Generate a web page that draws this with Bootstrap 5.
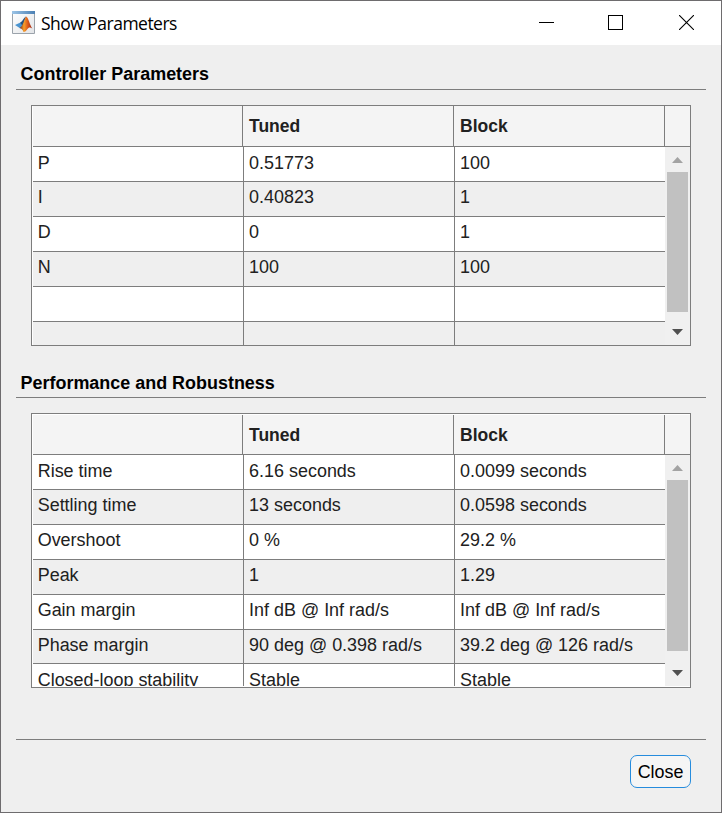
<!DOCTYPE html>
<html lang="en">
<head>
<meta charset="utf-8">
<title>Show Parameters</title>
<link href="https://cdn.jsdelivr.net/npm/bootstrap@5.3.0/dist/css/bootstrap.min.css" rel="stylesheet">
<style>
  :root { --line: #7d7d7d; }
  body { font-family: "Liberation Sans", Arial, sans-serif; font-size: 17.5px; line-height: 20px; color: #212121; }
  .dialog { width: 722px; height: 813px; border: 1px solid #6e6c6e; background: #efefef; }
  .titlebar { height: 44px; padding-left: 10px; color: #000; }
  .titlebar-text { font-family: "Open Sans", "Noto Sans", sans-serif; font-size: 17.5px; letter-spacing: -.52px; padding: 0 0 1px 5px; }
  .win-controls { gap: 54px; padding: 0 27px 2px 0; }
  .win-close { margin-left: 2px; }
  .section-title { font-size: 17.95px; line-height: 20px; font-weight: 700; color: #000; margin: 0 15px; padding: 0 4.6px; height: 45px; border-bottom: 1px solid var(--line); }
  .section-title span { padding-top: 19px; }
  .section-two { height: 52px; }
  .section-two span { padding-top: 27px; }
  .grid-box { margin: 15px 30px 0; width: 660px; border: 1px solid var(--line); background: #fff; padding-left: 1px; }
  .grid-one { height: 241px; }
  .grid-two { height: 275px; padding-top: 1px; padding-bottom: 1px; }
  .grid-head { background: #f4f4f4; border-bottom: 1px solid var(--line); height: 41px; font-weight: 700; }
  .grid-two .grid-head { height: 40px; }
  .grid-head > div { width: 211px; padding: 10px 6px 0; border-right: 1px solid var(--line); }
  .grid-head > .blank { width: 210px; }
  .grid-rows { width: 632px; font-size: 17.95px; }
  .grid-line { height: 35px; border-bottom: 1px solid var(--line); }
  .grid-line:nth-child(even) { background: #efefef; }
  .grid-line:nth-child(6) { height: 34px; }
  .grid-line > div { width: 211px; flex-shrink: 0; padding: 5px 5.1px 0; border-right: 1px solid var(--line); white-space: nowrap; }
  .grid-line > div:first-child { padding-left: 4.7px; }
  .grid-line:first-child > div, .grid-line:nth-child(7) > div { padding-top: 6px; }
  .grid-line > div:last-child { border-right: 0; width: 210px; }
  .scroll { width: 25px; background: #f0f0f0; padding-left: 2px; }
  .scroll svg { margin-left: 5px; }
  .thumb { width: 21px; background: #c1c1c1; }
  .footer-bar { margin: 51px 15px 0; border-top: 1px solid var(--line); padding: 15px 15px 0; }
  .close-btn { --bs-btn-border-radius: 7px; width: 61px; height: 33px; border: 1px solid #268cdd; background: #f5f5f5; color: #000; font-size: 17.9px; line-height: 20px; }
</style>
<script src="https://cdn.jsdelivr.net/npm/bootstrap@5.3.0/dist/js/bootstrap.bundle.min.js"></script>
</head>
<body>
<main class="dialog d-flex flex-column overflow-hidden">
  <header class="titlebar d-flex align-items-center bg-white flex-shrink-0">
    <svg width="25" height="25" viewBox="0 0 25 25">
      <defs>
        <linearGradient id="bar"><stop stop-color="#9cc4e6"/><stop offset="1" stop-color="#4b80b4"/></linearGradient>
        <linearGradient id="paper" x2="1" y2="1"><stop stop-color="#fff"/><stop offset="1" stop-color="#e2e4e7"/></linearGradient>
        <linearGradient id="peak"><stop stop-color="#7a1c10"/><stop offset=".35" stop-color="#f6a12c"/><stop offset=".6" stop-color="#e2611c"/><stop offset="1" stop-color="#9c2414"/></linearGradient>
      </defs>
      <path d="M1.500 .5h22v22h-22z" fill="url(#paper)" stroke="#9ba3ab"/>
      <path d="M1 0h23v3H1z" fill="url(#bar)"/>
      <path d="M4 14l5.500-2.500 3.500 3-3.500 3z" fill="#4a94d0"/>
      <path d="M9 11.700c2.500-.7 3.500-5 6-6.200L12 15z" fill="#28517f"/>
      <path d="M8.500 17c3.500-1 5-10 6.800-11.500 2 1 3.500 8.500 6 12-2-1.500-3.500-1.500-5 .7-1 1.500-2.200 2.600-3.800 2.800-.5-2-1.800-3.500-4-4z" fill="url(#peak)"/>
    </svg>
    <span class="titlebar-text">Show Parameters</span>
    <div class="win-controls d-flex align-items-center ms-auto">
      <svg width="15" height="15" shape-rendering="crispEdges"><path d="M0 7.500h15" stroke="#000"/></svg>
      <svg width="15" height="15" shape-rendering="crispEdges"><path d="M.5 .5h14v14H.5z" fill="none" stroke="#000"/></svg>
      <svg class="win-close" width="15" height="15"><path d="M0 0l15 15M15 0L0 15" stroke="#000" stroke-width="1.100"/></svg>
    </div>
  </header>

  <h2 class="section-title d-flex flex-shrink-0"><span>Controller Parameters</span></h2>
  <section class="grid-box grid-one d-flex flex-column flex-shrink-0">
    <div class="grid-head d-flex flex-shrink-0"><div class="blank"></div><div>Tuned</div><div>Block</div></div>
    <div class="d-flex flex-grow-1 overflow-hidden">
      <div class="grid-rows">
        <div class="grid-line d-flex"><div>P</div><div>0.51773</div><div>100</div></div>
        <div class="grid-line d-flex"><div>I</div><div>0.40823</div><div>1</div></div>
        <div class="grid-line d-flex"><div>D</div><div>0</div><div>1</div></div>
        <div class="grid-line d-flex"><div>N</div><div>100</div><div>100</div></div>
        <div class="grid-line d-flex"><div></div><div></div><div></div></div>
        <div class="grid-line d-flex"><div></div><div></div><div></div></div>
      </div>
      <div class="scroll d-flex flex-column">
        <svg class="flex-shrink-0" width="11" height="25"><path d="M0 16L5.500 10 11 16z" fill="#a3a3a3"/></svg>
        <div class="thumb flex-grow-1"></div>
        <svg class="flex-shrink-0" width="11" height="33"><path d="M0 17h11L5.500 23z" fill="#505050"/></svg>
      </div>
    </div>
  </section>

  <h2 class="section-title section-two d-flex flex-shrink-0"><span>Performance and Robustness</span></h2>
  <section class="grid-box grid-two d-flex flex-column flex-shrink-0">
    <div class="grid-head d-flex flex-shrink-0"><div class="blank"></div><div>Tuned</div><div>Block</div></div>
    <div class="d-flex flex-grow-1 overflow-hidden">
      <div class="grid-rows">
        <div class="grid-line d-flex"><div>Rise time</div><div>6.16 seconds</div><div>0.0099 seconds</div></div>
        <div class="grid-line d-flex"><div>Settling time</div><div>13 seconds</div><div>0.0598 seconds</div></div>
        <div class="grid-line d-flex"><div>Overshoot</div><div>0 %</div><div>29.2 %</div></div>
        <div class="grid-line d-flex"><div>Peak</div><div>1</div><div>1.29</div></div>
        <div class="grid-line d-flex"><div>Gain margin</div><div>Inf dB @ Inf rad/s</div><div>Inf dB @ Inf rad/s</div></div>
        <div class="grid-line d-flex"><div>Phase margin</div><div>90 deg @ 0.398 rad/s</div><div>39.2 deg @ 126 rad/s</div></div>
        <div class="grid-line d-flex"><div>Closed-loop stability</div><div>Stable</div><div>Stable</div></div>
      </div>
      <div class="scroll d-flex flex-column">
        <svg class="flex-shrink-0" width="11" height="25"><path d="M0 16L5.500 10 11 16z" fill="#a3a3a3"/></svg>
        <div class="thumb flex-grow-1"></div>
        <svg class="flex-shrink-0" width="11" height="35"><path d="M0 19h11L5.500 25z" fill="#505050"/></svg>
      </div>
    </div>
  </section>

  <footer class="footer-bar d-flex justify-content-end">
    <button type="button" class="btn close-btn p-0">Close</button>
  </footer>
</main>
</body>
</html>
